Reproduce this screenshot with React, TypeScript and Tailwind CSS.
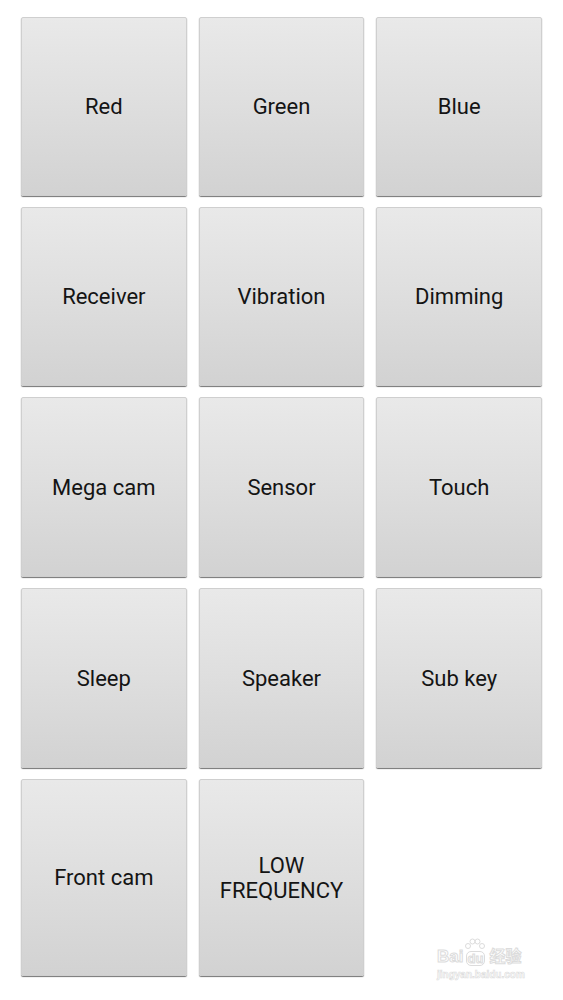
import React from 'react';

const labels = [
  'Red', 'Green', 'Blue',
  'Receiver', 'Vibration', 'Dimming',
  'Mega cam', 'Sensor', 'Touch',
  'Sleep', 'Speaker', 'Sub key',
  'Front cam', 'LOW\nFREQUENCY',
];

const Tile: React.FC<{ label: string }> = ({ label }) => (
  <button
    className="relative flex items-center justify-center rounded-[2px] border border-[#cfcfcf] bg-[linear-gradient(180deg,#e9e9e9_0%,#dedede_50%,#d2d2d2_100%)] shadow-[0_1px_1px_rgba(0,0,0,0.55)] text-[22px] leading-[25px] text-[#141414] whitespace-pre-line text-center"
    style={{ fontFamily: 'Roboto, "Liberation Sans", sans-serif' }}
  >
    {label}
  </button>
);

const Watermark: React.FC = () => (
  <div className="absolute left-[437px] top-[938px] w-[92px] select-none pointer-events-none">
    <div className="flex items-end text-[17px] leading-[18px] font-bold text-transparent [-webkit-text-stroke:1px_#dcdcdc]" style={{ fontFamily: '"Liberation Sans", "Noto Sans CJK SC", sans-serif' }}>
      <span>Bai</span>
      <span className="relative flex flex-col items-center">
        <svg width="24" height="12" viewBox="0 0 24 12" className="mb-[1px]" fill="none" stroke="#dcdcdc" strokeWidth="1">
          <circle cx="5" cy="8" r="2.5" />
          <circle cx="9.5" cy="3.5" r="2.5" />
          <circle cx="14.5" cy="3.5" r="2.5" />
          <circle cx="19" cy="8" r="2.5" />
        </svg>
        <span className="rounded-[5px] border border-[#dcdcdc] px-[1px] text-[13px] leading-[13px]">du</span>
      </span>
      <span className="ml-[2px] text-[16px]">经验</span>
    </div>
    <div className="mt-[3px] text-[10px] leading-[11px] font-bold text-transparent [-webkit-text-stroke:0.6px_#dcdcdc]" style={{ fontFamily: '"Liberation Sans", sans-serif' }}>
      jingyan.baidu.com
    </div>
  </div>
);

export default function App() {
  return (
    <div className="relative w-[563px] h-[1000px] bg-white overflow-hidden">
      <div className="grid grid-cols-3 grid-rows-[179px_179px_180px_180px_197px] gap-x-[12px] gap-y-[11px] px-[21px] pt-[17px]">
        {labels.map(l => (
          <Tile key={l} label={l} />
        ))}
      </div>
      <Watermark />
    </div>
  );
}
